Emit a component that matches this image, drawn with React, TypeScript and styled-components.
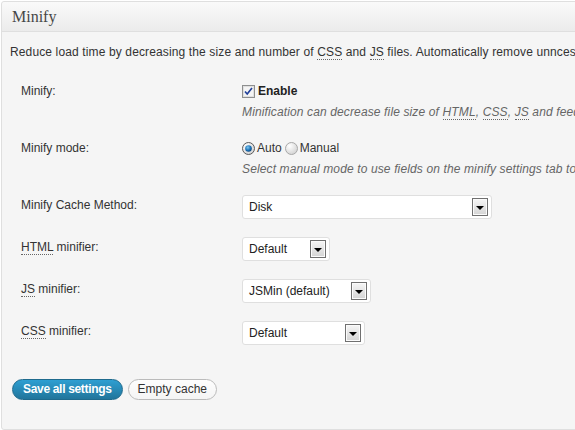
import React from "react";
import styled, { createGlobalStyle } from "styled-components";

const GlobalStyle = createGlobalStyle`
  html, body { margin: 0; padding: 0; background: #ffffff; overflow: hidden; }
  body { font-family: "Liberation Sans", Arial, sans-serif; font-size: 12px; color: #333; }
`;

const Panel = styled.div`
  margin: 1px 0 0 1px;
  width: 900px;
  border: 1px solid #dfdfdf;
  border-radius: 3px;
  background: #f5f5f5;
`;

const PanelHeader = styled.div`
  height: 29px;
  padding: 0 10px;
  display: flex;
  align-items: center;
  background: linear-gradient(#fafafa, #ebebeb);
  border-bottom: 1px solid #dfdfdf;
  border-radius: 3px 3px 0 0;
`;

const Title = styled.h3`
  margin: 0;
  font-family: "Liberation Serif", "Times New Roman", serif;
  font-size: 16px;
  font-weight: normal;
  color: #464646;
  line-height: 20px;
`;

const PanelBody = styled.div`
  padding: 12px 8px 29px 8px;
`;

const Intro = styled.p`
  margin: 0 0 13px;
  line-height: 16px;
  white-space: nowrap;
  letter-spacing: 0.13px;
  color: #333;
`;

const Abbr = styled.abbr`
  text-decoration: none;
  border-bottom: 1px dotted #666;
`;

const Row = styled.div`
  display: grid;
  grid-template-columns: 221px 1fr;
  padding: 10px 0 10px 11px;
`;

const Label = styled.div`
  line-height: 16px;
  color: #333;
`;

const Control = styled.div`
  display: flex;
  flex-direction: column;
  align-items: flex-start;
`;

const Line = styled.div`
  display: flex;
  align-items: center;
  height: 16px;
  line-height: 16px;
`;

const Description = styled.div`
  margin-top: 5px;
  line-height: 16px;
  font-style: italic;
  letter-spacing: 0.13px;
  color: #666;
  white-space: nowrap;
`;

const CheckLabel = styled.span`
  margin-left: 3px;
  font-weight: bold;
  color: #222;
`;

const RadioLabel = styled.span<{ $gap?: boolean }>`
  margin-left: 2px;
  margin-right: ${(p) => (p.$gap ? "3px" : "0")};
  color: #333;
`;

const SelectBox = styled.div<{ $w: number }>`
  box-sizing: border-box;
  width: ${(p) => p.$w}px;
  height: 24px;
  margin-top: -2px;
  padding: 0 3px 0 6px;
  display: flex;
  align-items: center;
  justify-content: space-between;
  background: #fff;
  border: 1px solid #dfdfdf;
  border-radius: 3px;
  color: #222;
`;

const ArrowBox = styled.span`
  box-sizing: border-box;
  width: 16px;
  height: 18px;
  border: 1px solid #707070;
  background: linear-gradient(#f6f6f6, #d4d4d4);
  box-shadow: inset 0 0 0 1px #fbfbfb;
  display: flex;
  align-items: center;
  justify-content: center;
  padding-top: 2px;
  &::after {
    content: "";
    width: 0;
    height: 0;
    border-left: 4px solid transparent;
    border-right: 4px solid transparent;
    border-top: 4px solid #000;
  }
`;

const ButtonBar = styled.div`
  margin-top: 24px;
  padding-left: 2px;
  display: flex;
  gap: 5px;
`;

const Button = styled.button<{ $primary?: boolean }>`
  box-sizing: border-box;
  height: 21px;
  padding: 0 ${(p) => (p.$primary ? "10px" : "9px")};
  border-radius: 11px;
  font-family: "Liberation Sans", Arial, sans-serif;
  font-size: 12px;
  line-height: 19px;
  cursor: pointer;
  border: 1px solid ${(p) => (p.$primary ? "#1e6a8d" : "#bbb")};
  background: ${(p) =>
    p.$primary ? "linear-gradient(#2e9fd2, #21759b)" : "linear-gradient(#fefefe, #f4f4f4)"};
  color: ${(p) => (p.$primary ? "#fff" : "#333")};
  font-weight: ${(p) => (p.$primary ? "bold" : "normal")};
  letter-spacing: ${(p) => (p.$primary ? "-0.32px" : "0")};
`;

const Checkbox = () => (
  <svg width="13" height="13" viewBox="0 0 13 13">
    <rect x="0.5" y="0.5" width="12" height="12" fill="#f4f4f4" stroke="#8e8f8f" />
    <rect x="1.5" y="1.5" width="10" height="10" fill="none" stroke="#e0e0e0" />
    <path d="M3 6.5 L5.2 9 L10 3" fill="none" stroke="#21409a" strokeWidth="1.7" />
  </svg>
);

const Radio = ({ checked }: { checked?: boolean }) => (
  <svg width="13" height="13" viewBox="0 0 13 13">
    <defs>
      <radialGradient id="rOff" cx="0.35" cy="0.3" r="0.8">
        <stop offset="0" stopColor="#ffffff" />
        <stop offset="1" stopColor="#cfcfcf" />
      </radialGradient>
      <radialGradient id="rOn" cx="0.4" cy="0.35" r="0.7">
        <stop offset="0" stopColor="#7fc8f0" />
        <stop offset="0.6" stopColor="#1a72b8" />
        <stop offset="1" stopColor="#0c3f74" />
      </radialGradient>
    </defs>
    <circle cx="6.5" cy="6.5" r="6" fill="url(#rOff)" stroke={checked ? "#5a5a5a" : "#a8a8a8"} />
    {checked && <circle cx="6.5" cy="6.5" r="3.3" fill="url(#rOn)" />}
  </svg>
);

const Select = ({ w, value }: { w: number; value: string }) => (
  <SelectBox $w={w}>
    <span>{value}</span>
    <ArrowBox />
  </SelectBox>
);

export default function App() {
  return (
    <>
      <GlobalStyle />
      <Panel>
        <PanelHeader>
          <Title>Minify</Title>
        </PanelHeader>
        <PanelBody>
          <Intro>
            Reduce load time by decreasing the size and number of <Abbr>CSS</Abbr> and{" "}
            <Abbr>JS</Abbr> files. Automatically remove unncessary data from <Abbr>CSS</Abbr>,{" "}
            <Abbr>JS</Abbr>, feed, page and post <Abbr>HTML</Abbr>.
          </Intro>

          <Row>
            <Label>Minify:</Label>
            <Control>
              <Line>
                <Checkbox />
                <CheckLabel>Enable</CheckLabel>
              </Line>
              <Description>
                Minification can decrease file size of <Abbr>HTML</Abbr>, <Abbr>CSS</Abbr>,{" "}
                <Abbr>JS</Abbr> and feeds respectively by ~10% on average.
              </Description>
            </Control>
          </Row>

          <Row>
            <Label>Minify mode:</Label>
            <Control>
              <Line>
                <Radio checked />
                <RadioLabel $gap>Auto</RadioLabel>
                <Radio />
                <RadioLabel>Manual</RadioLabel>
              </Line>
              <Description>
                Select manual mode to use fields on the minify settings tab to specify files to be
                minified, otherwise files will be minified automatically.
              </Description>
            </Control>
          </Row>

          <Row>
            <Label>Minify Cache Method:</Label>
            <Control>
              <Select w={250} value="Disk" />
            </Control>
          </Row>

          <Row>
            <Label>
              <Abbr>HTML</Abbr> minifier:
            </Label>
            <Control>
              <Select w={88} value="Default" />
            </Control>
          </Row>

          <Row>
            <Label>
              <Abbr>JS</Abbr> minifier:
            </Label>
            <Control>
              <Select w={129} value="JSMin (default)" />
            </Control>
          </Row>

          <Row>
            <Label>
              <Abbr>CSS</Abbr> minifier:
            </Label>
            <Control>
              <Select w={123} value="Default" />
            </Control>
          </Row>

          <ButtonBar>
            <Button $primary>Save all settings</Button>
            <Button>Empty cache</Button>
          </ButtonBar>
        </PanelBody>
      </Panel>
    </>
  );
}
